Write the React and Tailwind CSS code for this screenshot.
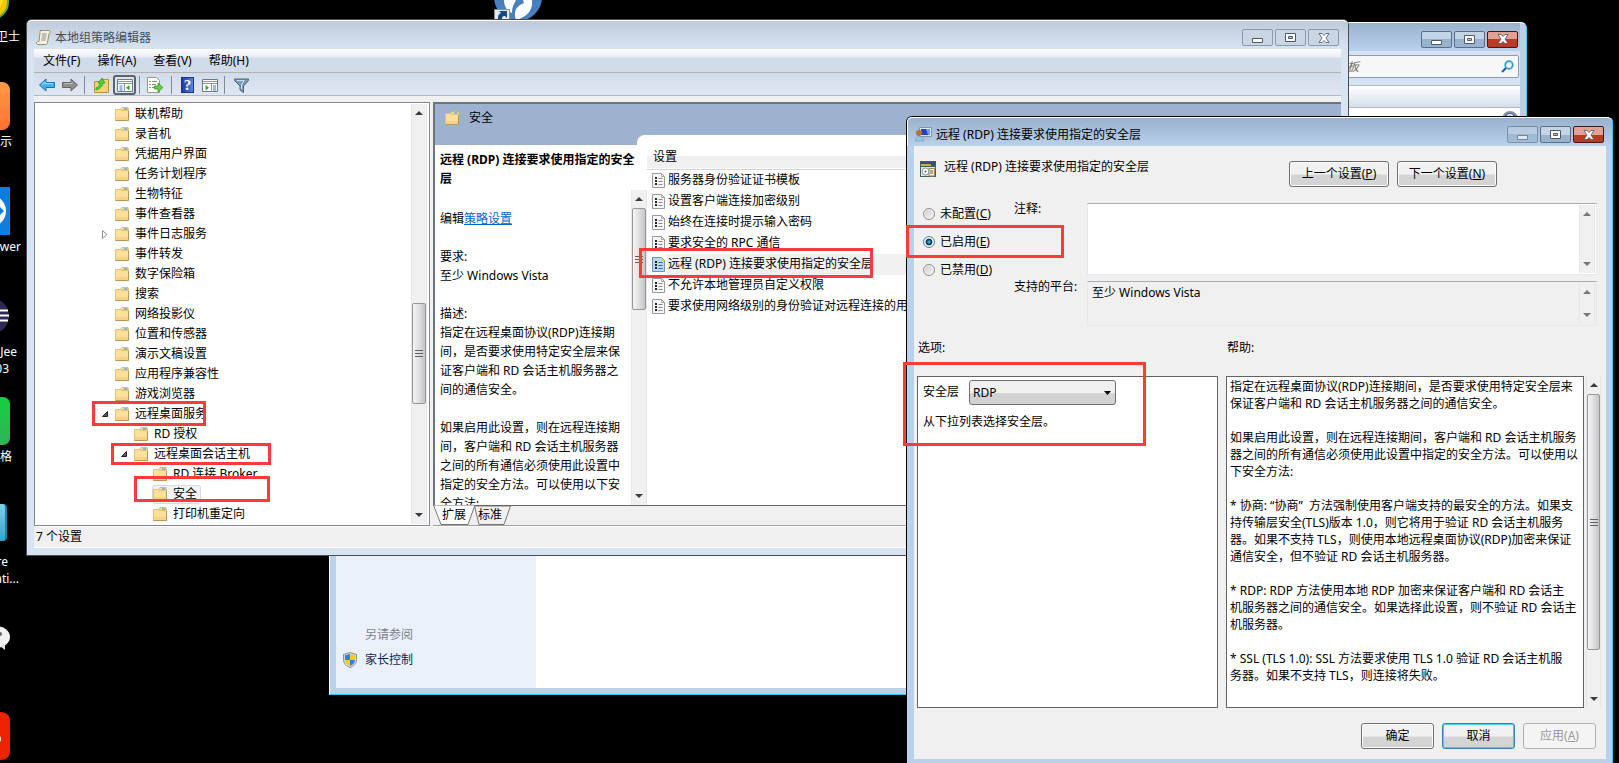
import React, { useState } from 'react';

const treeItems = [
    { label: '联机帮助', level: 0 },
    { label: '录音机', level: 0 },
    { label: '凭据用户界面', level: 0 },
    { label: '任务计划程序', level: 0 },
    { label: '生物特征', level: 0 },
    { label: '事件查看器', level: 0 },
    { label: '事件日志服务', level: 0, arrow: 'closed' },
    { label: '事件转发', level: 0 },
    { label: '数字保险箱', level: 0 },
    { label: '搜索', level: 0 },
    { label: '网络投影仪', level: 0 },
    { label: '位置和传感器', level: 0 },
    { label: '演示文稿设置', level: 0 },
    { label: '应用程序兼容性', level: 0 },
    { label: '游戏浏览器', level: 0 },
    { label: '远程桌面服务', level: 0, arrow: 'open' },
    { label: 'RD 授权', level: 1 },
    { label: '远程桌面会话主机', level: 1, arrow: 'open' },
    { label: 'RD 连接 Broker', level: 2 },
    { label: '安全', level: 2, selected: true },
    { label: '打印机重定向', level: 2 },
];

const levelPadding = ['pl-[67px]', 'pl-[86px]', 'pl-[105px]'];

const policies = [
    '服务器身份验证证书模板',
    '设置客户端连接加密级别',
    '始终在连接时提示输入密码',
    '要求安全的 RPC 通信',
    '远程 (RDP) 连接要求使用指定的安全层',
    '不允许本地管理员自定义权限',
    '要求使用网络级别的身份验证对远程连接的用户',
];

const description = [
    '指定在远程桌面协议(RDP)连接期',
    '间，是否要求使用特定安全层来保',
    '证客户端和 RD 会话主机服务器之',
    '间的通信安全。',
    '',
    '如果启用此设置，则在远程连接期',
    '间，客户端和 RD 会话主机服务器',
    '之间的所有通信必须使用此设置中',
    '指定的安全方法。可以使用以下安',
    '全方法:',
];

const helpLines = [
    '指定在远程桌面协议(RDP)连接期间，是否要求使用特定安全层来',
    '保证客户端和 RD 会话主机服务器之间的通信安全。',
    '',
    '如果启用此设置，则在远程连接期间，客户端和 RD 会话主机服务',
    '器之间的所有通信必须使用此设置中指定的安全方法。可以使用以',
    '下安全方法:',
    '',
    '* 协商: “协商”  方法强制使用客户端支持的最安全的方法。如果支',
    '持传输层安全(TLS)版本 1.0，则它将用于验证 RD 会话主机服务',
    '器。如果不支持 TLS，则使用本地远程桌面协议(RDP)加密来保证',
    '通信安全，但不验证 RD 会话主机服务器。',
    '',
    '* RDP: RDP 方法使用本地 RDP 加密来保证客户端和 RD 会话主',
    '机服务器之间的通信安全。如果选择此设置，则不验证 RD 会话主',
    '机服务器。',
    '',
    '* SSL (TLS 1.0): SSL 方法要求使用 TLS 1.0 验证 RD 会话主机服',
    '务器。如果不支持 TLS，则连接将失败。',
];

const FolderIcon = () => (
    <svg width="14" height="14" viewBox="0 0 14 14" className="shrink-0">
        <path d="M6 1.5 7 .5h6l1 1V6H6z" fill="#efd9a0" stroke="#c9b27c" strokeWidth=".8" />
        <path d="M9 2h3.5" stroke="#5f9bd0" strokeWidth="1.2" />
        <path d="M.5 2.500h5l1 1h7v10H.5z" fill="#ffe09a" stroke="#e3c077" />
        <path d="M1 10h12v3H1z" fill="#f9d283" />
        <path d="M.5 13.500h13V4" fill="none" stroke="#b8975a" />
    </svg>
);

const PolicyIcon = ({ active }) => (
    <svg width="13" height="15" viewBox="0 0 13 15" className="shrink-0">
        <path d="M.5.5h9l3 3v11H.5z" fill={active ? '#b5d8fb' : '#f8f8f8'} stroke={active ? '#6d93b8' : '#9b9b9b'} />
        <path d="M9.500 1v2.500h3" fill="none" stroke={active ? '#e5e500' : '#a9a9a9'} />
        <path d="M3 4h2v2H3zM3 7h2v2H3zM3 10h2v2H3z" fill="#222" />
        <path d="M6.500 5.500h4M6.500 8.500h4M6.500 11.500h4" stroke={active ? '#37669a' : '#8a8a8a'} />
    </svg>
);

const Triangle = ({ down, faded }) => (
    <svg width="8" height="4" viewBox="0 0 8 4" className="shrink-0">
        <path d={down ? 'M0 0h8L4 4z' : 'M0 4h8L4 0z'} fill={faded ? '#777' : '#3c3c3c'} />
    </svg>
);

// thumb holds the full classes for the position and size of the handle
const ScrollBar = ({ thumb, faded, className }) => (
    <div className={`relative flex shrink-0 flex-col items-center justify-between bg-[#f0f0f0] border-x border-[#e6e6e6] py-[7px] ${className}`}>
        <Triangle faded={faded} />
        {thumb && (
            <div className={`absolute inset-x-0 flex items-center justify-center rounded-[2px] border border-[#979797] bg-gradient-to-r from-[#f5f5f5] via-[#dfdfe1] to-[#c4c5c9] ${thumb}`}>
                <svg width="8" height="9" viewBox="0 0 8 9">
                    <path d="M0 1.500h8M0 4.500h8M0 7.500h8" stroke="#606060" />
                </svg>
            </div>
        )}
        <Triangle down faded={faded} />
    </div>
);

const CaptionButtons = ({ inactive, dimMin }) => {
    const base = 'flex h-[17px] w-[31px] items-center justify-center rounded-[2px] border';
    const plain = inactive
        ? 'border-[#8b99aa] bg-[#cad6e3]'
        : 'border-[#5b6f88] bg-gradient-to-b from-[#c3d4e7] from-50% to-[#98b3d0] to-50%';
    return (
        <div className="flex gap-[2px]">
            <button aria-label="最小化" className={`${base} ${plain} ${dimMin ? 'opacity-60' : ''}`}>
                <svg width="11" height="11" viewBox="0 0 11 11">
                    <path d="M.5 6.500h10v4H.5z" fill="#fff" stroke="#505a66" />
                </svg>
            </button>
            <button aria-label="最大化" className={`${base} ${plain}`}>
                <svg width="11" height="9" viewBox="0 0 11 9">
                    <path d="M.5.5h10v8H.5z" fill="#fff" stroke="#505a66" />
                    <path d="M3.500 3.500h4v2h-4z" fill="#b5c6da" stroke="#505a66" />
                </svg>
            </button>
            <button
                aria-label="关闭"
                className={`${base} ${inactive ? plain : 'border-[#431621] bg-gradient-to-b from-[#e3a094] from-50% to-[#b93b24] to-50%'}`}
            >
                <svg width="12" height="10" viewBox="0 0 12 10">
                    <path d="M1 .5h3l2 2 2-2h3L8 5l3 4.500H8L6 7.500l-2 2H1L4 5z" fill="#fff" stroke="#57606e" strokeWidth=".9" />
                </svg>
            </button>
        </div>
    );
};

const ToolSep = () => <div className="h-[18px] w-px bg-[#7f8a98]" />;

const Toolbar = () => (
    <div className="flex h-[23px] items-center border-b border-[#aeb9c9] bg-gradient-to-b from-[#d1dcea] to-[#e1e7f1] pl-[5px] pt-[2px]">
        <button aria-label="后退" className="mr-[7px]">
            <svg width="16" height="14" viewBox="0 0 16 14">
                <path d="M.5 7 7 1v3.500h8.500v5H7V13z" fill="#46b2ea" stroke="#1f6fb5" />
                <path d="M3 6.500 6 4v1.500h8" fill="none" stroke="#a5e0fa" />
            </svg>
        </button>
        <button aria-label="前进" className="mr-[6px]">
            <svg width="16" height="14" viewBox="0 0 16 14">
                <path d="M15.500 7 9 1v3.500H.5v5H9V13z" fill="#8f8f8f" stroke="#646464" />
                <path d="M2 5.500h8V4" fill="none" stroke="#c0c0c0" />
            </svg>
        </button>
        <ToolSep />
        <button aria-label="上移一级" className="ml-[9px] mr-[4px]">
            <svg width="15" height="16" viewBox="0 0 15 16">
                <path d="M.5 4.500h6l2-2h6v13H.5z" fill="#f5d07c" stroke="#b9913f" />
                <path d="M2 11c2-1 4-3 4-5H4l4-5 3 5H9c0 3-3 6-7 7z" fill="#4bd33a" stroke="#1f9a1c" strokeWidth=".7" />
            </svg>
        </button>
        <button aria-label="显示/隐藏控制台树" className="mr-[3px] flex h-[20px] w-[23px] items-center justify-center rounded-[3px] border-2 border-[#5c6470] bg-[#dde4ec]">
            <svg width="16" height="13" viewBox="0 0 16 13">
                <path d="M.5.5h15v12H.5z" fill="#fff" stroke="#6e7a86" />
                <path d="M1 2.500h14M1 4.500h14M7.500 5v8" stroke="#8b96a2" />
                <path d="M2.500 7h3M2.500 9h3M2.500 11h3" stroke="#2f78c4" />
                <path d="M12.500 6v5.500L9 8.700z" fill="#36a51f" />
            </svg>
        </button>
        <ToolSep />
        <button aria-label="导出列表" className="mx-[7px]">
            <svg width="17" height="16" viewBox="0 0 17 16">
                <path d="M.5.500h9l3 3v12H.5z" fill="#fffdf0" stroke="#9a9a8c" />
                <path d="M2.500 4.500h1M2.500 7.500h1M2.500 10.500h1" stroke="#333" />
                <path d="M5 4.500h5M5 7.500h4M5 10.500h3" stroke="#888" />
                <path d="M7.500 9H11V6l5 4.500-5 4.500v-3H7.500z" fill="#5bd33d" stroke="#2c9a1e" strokeWidth=".7" />
            </svg>
        </button>
        <ToolSep />
        <button aria-label="帮助" className="ml-[9px] mr-[8px] flex h-[16px] w-[13px] items-center justify-center border border-[#1c3588] bg-gradient-to-r from-[#1d3d9c] to-[#5a85dd] font-['Liberation_Serif',serif] text-[15px] font-bold leading-[14px] text-white">
            ?
        </button>
        <button aria-label="显示/隐藏操作窗格" className="mr-[6px]">
            <svg width="16" height="13" viewBox="0 0 16 13">
                <path d="M.5.5h15v12H.5z" fill="#fff" stroke="#6e7a86" />
                <path d="M1 2.500h14M1 4.500h14M9.500 5v8" stroke="#8b96a2" />
                <path d="M11 7h3M11 9h3M11 11h3" stroke="#2f78c4" />
                <path d="M3.500 6v5.500L7 8.700z" fill="#36a51f" />
            </svg>
        </button>
        <ToolSep />
        <button aria-label="筛选器" className="ml-[9px]">
            <svg width="15" height="15" viewBox="0 0 15 15">
                <path d="M.5 1h14v1.500L9.500 8v6.500L6 12V8L.5 2.500z" fill="#7d9bb5" stroke="#4c657c" />
                <path d="M3 2.500h7L7.500 7v4" fill="none" stroke="#d0e2f0" />
            </svg>
        </button>
    </div>
);

const TreeRow = ({ item }) => (
    <li className={`flex h-[20px] items-center ${levelPadding[item.level]}`}>
        <span className="flex w-[12px] shrink-0 items-center">
            {item.arrow === 'closed' && (
                <svg width="6" height="9" viewBox="0 0 6 9">
                    <path d="M.5.500v8l4.500-4z" fill="#fff" stroke="#8f8f8f" />
                </svg>
            )}
            {item.arrow === 'open' && (
                <svg width="6" height="6" viewBox="0 0 6 6">
                    <path d="M5.500.5v5h-5z" fill="#595959" stroke="#222" />
                </svg>
            )}
        </span>
        <span className={`flex h-[19px] items-center gap-[6px] rounded-[3px] border pr-[3px] ${item.selected ? 'border-[#dadada] bg-[#f2f2f2]' : 'border-transparent'}`}>
            <FolderIcon />
            <span className="whitespace-nowrap">{item.label}</span>
        </span>
    </li>
);

const Tabs = () => (
    <div className="relative flex h-[21px] items-center border-b border-[#a0a0a0] bg-[#f0f0f0]">
        <svg width="80" height="20" viewBox="0 0 80 20" className="absolute left-0 top-0">
            <path d="M41.500 1 46 19.500h25L77.500 1z" fill="#f0f0f0" stroke="#777" />
            <path d="M.5 0 8 19.500h27L42 0z" fill="#fff" stroke="#777" />
        </svg>
        <div className="absolute left-[42px] right-0 top-0 h-px bg-[#696969]" />
        <button className="relative ml-[9px]">扩展</button>
        <button className="relative ml-[12px]">标准</button>
    </div>
);

const PolicyEditor = () => (
    <section className="absolute left-[26px] right-[270px] top-[19px] rounded-t-[6px] border border-[#4d4d4d] bg-[#d7e4f2] px-[7px] pb-[7px]">
        <header className="-mx-[7px] flex h-[29px] items-center rounded-t-[5px] border-t border-white bg-gradient-to-b from-[#bfcbda] to-[#d7e4f2] pl-[9px] pr-[9px] pt-[5px]">
            <svg width="15" height="15" viewBox="0 0 15 15" className="mr-[4px]">
                <path d="M4 .5h9.500c1 0 1 3-.5 3l-1.500 9c0 1.500-1 2-2 2H2c-2 0-2-3 0-3h1l1-9c0-1 .5-2 0-2z" fill="#f6f0df" stroke="#9c8f70" />
                <path d="M6 4h4.500M6 6h4.500M5.500 8H10M5 10h4.500" stroke="#8b8f96" />
            </svg>
            <h1 className="flex-1 text-[#42505c]">本地组策略编辑器</h1>
            <CaptionButtons inactive />
        </header>
        <nav className="flex h-[24px] items-center gap-[17px] border-b border-[#b3b3b3] bg-gradient-to-b from-white via-[#e8edf6] via-35% to-[#d1dcea] to-40% pl-[9px]">
            <button>文件(F)</button>
            <button>操作(A)</button>
            <button>查看(V)</button>
            <button>帮助(H)</button>
        </nav>
        <Toolbar />
        <div className="flex gap-[3px] bg-[#f0f0f0] pt-[6px]">
            <div className="flex w-[396px] shrink-0 border border-[#828790] bg-white py-px pr-[2px]">
                <ul className="min-w-0 flex-1">
                    {treeItems.map((item) => (
                        <TreeRow key={item.label} item={item} />
                    ))}
                </ul>
                <ScrollBar className="w-[16px]" thumb="top-[199px] h-[101px]" />
            </div>
            <div className="flex min-w-0 flex-1 flex-col">
                <div className="flex min-h-0 flex-1 flex-col border-l-2 border-t-2 border-[#6f747c] bg-[#9cb2ce]">
                    <div className="flex h-[31px] shrink-0 items-center gap-[10px] pb-[3px] pl-[10px]">
                        <FolderIcon />
                        <span>安全</span>
                    </div>
                    <div className="h-[10px] shrink-0 pl-[202px]">
                        <div className="h-full rounded-tl-[8px] bg-white" />
                    </div>
                    <div className="flex min-h-0 flex-1 bg-white">
                        <div className="flex w-[212px] shrink-0 flex-col">
                            <h2 className="whitespace-nowrap pb-[2px] pl-[5px] pt-[5px] font-bold leading-[19px]">
                                远程 (RDP) 连接要求使用指定的安全
                                <br />层
                            </h2>
                            <div className="flex h-0 grow overflow-hidden">
                                <div className="flex-1 whitespace-nowrap pl-[5px] pt-[19px] leading-[19px]">
                                    <p>
                                        编辑
                                        <a href="#" className="text-[#0066cc] underline">策略设置</a>
                                    </p>
                                    <p className="mt-[19px]">要求:</p>
                                    <p>至少 Windows Vista</p>
                                    <p className="mt-[19px]">描述:</p>
                                    {description.map((line, i) => (
                                        <p key={i} className="h-[19px]">{line}</p>
                                    ))}
                                </div>
                                <ScrollBar className="w-[16px]" thumb="top-[18px] h-[102px]" />
                            </div>
                        </div>
                        <table className="h-fit min-w-0 flex-1 table-fixed border-collapse">
                            <thead>
                                <tr className="h-[24px] border-b border-[#d5d5d5] bg-gradient-to-b from-white from-45% to-[#f0f0f0] to-50%">
                                    <th className="pl-[6px] text-left font-normal">设置</th>
                                </tr>
                            </thead>
                            <tbody>
                                {policies.map((name, i) => (
                                    <tr key={name} className="h-[21px]">
                                        <td className="p-0 pl-[5px]">
                                            <div className="flex h-[21px] items-center">
                                                <PolicyIcon active={i === 4} />
                                                <span className={`ml-[2px] flex h-full min-w-[440px] items-center whitespace-nowrap pl-px ${i === 4 ? 'bg-[#f0f0f0]' : ''}`}>
                                                    {name}
                                                </span>
                                            </div>
                                        </td>
                                    </tr>
                                ))}
                            </tbody>
                        </table>
                    </div>
                </div>
                <Tabs />
            </div>
        </div>
        <footer className="flex h-[22px] items-center border-y border-white bg-[#f0f0f0] pl-[2px]">7 个设置</footer>
    </section>
);

const ControlPanel = () => (
    <section className="absolute left-[329px] right-[92px] top-[22px] flex h-[673px] flex-col rounded-t-[6px] border border-b-[#2ec5df] border-l-white border-r-[#3bd0f0] border-t-white bg-[#b9d1ea] px-[6px] pb-[6px]">
        <header className="flex h-[28px] shrink-0 items-center justify-end bg-gradient-to-b from-[#9ab2cd] to-[#b9d1ea] pr-[2px] pt-[4px]">
            <CaptionButtons />
        </header>
        <div className="flex h-[34px] shrink-0 items-center justify-end bg-[#d5e2f1] pb-[3px] pr-[1px]">
            <div className="relative flex w-[242px] items-center">
                <input aria-label="搜索控制面板" placeholder="搜索控制面板" className="h-[23px] w-full rounded-[2px] border border-[#8c9bad] bg-[#f7f7f7] pl-[9px] italic placeholder:text-[#6d6d6d]" />
                <svg width="13" height="13" viewBox="0 0 13 13" className="absolute right-[5px]">
                    <circle cx="8" cy="5" r="3.800" fill="#e7f5ff" stroke="#3f9bd8" strokeWidth="1.800" />
                    <path d="M5 8 1 12" stroke="#2a5db0" strokeWidth="2.200" />
                </svg>
            </div>
        </div>
        <div className="h-[23px] shrink-0 border-y border-[#b0bccb] bg-gradient-to-b from-white to-[#d5deeb]" />
        <div className="flex min-h-0 flex-1 bg-white">
            <aside className="flex w-[200px] flex-col justify-end bg-[#eaf1fb] pb-[19px] pl-[7px]">
                <p className="pl-[22px] leading-[18px] text-[#7d828a]">另请参阅</p>
                <a href="#" className="mt-[7px] flex items-center gap-[8px] leading-[18px] text-[#151c55]">
                    <svg width="14" height="16" viewBox="0 0 14 16">
                        <path d="M7 .5 13.500 2.500v5c0 4-3 7-6.500 8C3.500 14.500.5 11.500.5 7.500v-5z" fill="#d5d8dc" stroke="#8a8f96" />
                        <path d="M7 2v6H2V3.300z" fill="#2c83dd" />
                        <path d="M7 2v6h5V3.300z" fill="#f6cc1d" />
                        <path d="M7 8v6C4 13 2.200 11 2 8z" fill="#f6cc1d" />
                        <path d="M7 8v6c3-1 4.800-3 5-6z" fill="#2c83dd" />
                    </svg>
                    家长控制
                </a>
            </aside>
            <div className="flex flex-1 justify-end pr-[2px] pt-[3px]">
                <svg width="16" height="16" viewBox="0 0 16 16">
                    <circle cx="8" cy="8" r="7" fill="#3466cf" stroke="#8e939b" strokeWidth="2" />
                    <path d="M5.500 6c0-3 5-3 5 0 0 2-2.500 2-2.500 4" fill="none" stroke="#fff" strokeWidth="1.600" />
                </svg>
            </div>
        </div>
    </section>
);

const dialogButton = 'h-[26px] rounded-[3px] border border-[#707070] bg-gradient-to-b from-[#f1f1f1] from-50% to-[#d4d4d4] to-55% shadow-[inset_0_0_0_1px_#fbfbfb]';

const states = [
    { id: 'unset', text: '未配置', hotkey: 'C' },
    { id: 'enabled', text: '已启用', hotkey: 'E' },
    { id: 'disabled', text: '已禁用', hotkey: 'D' },
];

const SettingDialog = () => {
    const [state, setState] = useState('enabled');
    const [layer, setLayer] = useState('RDP');

    return (
        <section className="absolute left-[906px] right-[6px] top-[116px] rounded-t-[6px] border border-l-black border-r-[#3bc4ea] border-t-black bg-[#b9d1ea] pb-[7px] pl-[7px] pr-[6px]">
            <header className="-ml-[7px] -mr-[6px] flex h-[29px] items-center rounded-t-[5px] border-l border-t border-white bg-gradient-to-b from-[#99b1cc] to-[#b9d1ea] pl-[7px] pr-[8px] pt-[5px]">
                <svg width="17" height="15" viewBox="0 0 17 15" className="mr-[4px]">
                    <path d="M4.500.5h12v9h-12z" fill="#e0e6ec" stroke="#8495a8" />
                    <path d="M6 2h9v6H6z" fill="#1c40cf" />
                    <path d="M11 2h4v6h-2z" fill="#6f9cf2" />
                    <path d="M9 10h4v2h2v1H8z" fill="#b5bfca" />
                    <circle cx="4" cy="6" r="3" fill="#b5713c" />
                    <path d="M0 14c0-6 8-6 9 0z" fill="#9dc3e4" stroke="#6e98bf" strokeWidth=".6" />
                </svg>
                <h2 className="flex-1">远程 (RDP) 连接要求使用指定的安全层</h2>
                <CaptionButtons dimMin />
            </header>
            <div className="bg-[#f0f0f0] pb-[10px] pt-[15px]">
                <div className="flex pl-[6px] pr-[109px]">
                    <svg width="16" height="16" viewBox="0 0 16 16" className="mr-[8px]">
                        <path d="M0 0h16v16H0z" fill="#41635f" />
                        <path d="M1 1h14v3H1z" fill="#2b4d8f" />
                        <path d="M1 3h10v2H1z" fill="#d9a92b" />
                        <path d="M1 6h14v9H1z" fill="#dfe6e4" />
                        <circle cx="5.500" cy="10.500" r="3.500" fill="#fff" stroke="#8a9a98" />
                        <circle cx="5.500" cy="10.500" r="1" fill="#556" />
                        <path d="M9 7.500h5.500V15H9z" fill="#f4ecd2" stroke="#a08a54" />
                        <path d="M10 10h3M10 12h3" stroke="#766" />
                    </svg>
                    <h3 className="flex-1 leading-[12px]">远程 (RDP) 连接要求使用指定的安全层</h3>
                    <div className="flex gap-[8px]">
                        <button className={`w-[100px] ${dialogButton}`}>上一个设置(<u>P</u>)</button>
                        <button className={`w-[100px] ${dialogButton}`}>下一个设置(<u>N</u>)</button>
                    </div>
                </div>

                <div className="mt-[13px] flex pl-[9px] pr-[9px]">
                    <div className="w-[91px] shrink-0">
                        {states.map((s) => (
                            <label key={s.id} className="flex h-[28px] items-center gap-[5px] whitespace-nowrap">
                                <input
                                    type="radio"
                                    name="state"
                                    checked={state === s.id}
                                    onChange={() => setState(s.id)}
                                    className="h-[12px] w-[12px] appearance-none rounded-full border border-[#8e8f8f] bg-gradient-to-br from-[#c9ccd0] to-[#f6f6f6] shadow-[inset_0_0_0_1px_#f4f4f4] checked:border-[#5586a3] checked:bg-[radial-gradient(circle,#58c3ee_0,#0f3c5c_36%,#0f3c5c_44%,#d8e6ee_52%)]"
                                />
                                <span>{s.text}(<u>{s.hotkey}</u>)</span>
                            </label>
                        ))}
                    </div>
                    <div className="flex min-w-0 flex-1 flex-col gap-[6px] pt-[3px]">
                        <div className="flex h-[72px]">
                            <label htmlFor="comment" className="w-[73px] shrink-0 leading-[12px]">注释:</label>
                            <div className="flex flex-1 border border-[#e3e9ef] border-t-[#abadb3] bg-white p-px">
                                <textarea id="comment" className="flex-1 resize-none bg-white outline-none" />
                                <ScrollBar className="w-[16px]" faded />
                            </div>
                        </div>
                        <div className="flex h-[45px]">
                            <span className="w-[73px] shrink-0 leading-[12px]">支持的平台:</span>
                            <div className="flex flex-1 border border-[#e3e9ef] border-t-[#abadb3] p-px">
                                <p className="flex-1 pl-[3px] leading-[20px]">至少 Windows Vista</p>
                                <ScrollBar className="w-[16px]" faded />
                            </div>
                        </div>
                    </div>
                </div>

                <div className="mt-[12px] flex pl-[4px] leading-[20px]">
                    <span className="w-[309px]">选项:</span>
                    <span>帮助:</span>
                </div>
                <div className="mt-[18px] flex pl-[3px] pr-[5px]">
                    <div className="mr-[8px] w-[301px] shrink-0 border border-[#646464] bg-white pl-[5px] pt-[3px]">
                        <div className="flex gap-[10px]">
                            <label htmlFor="layer" className="leading-[24px]">安全层</label>
                            <div className="relative flex items-center">
                                <select
                                    id="layer"
                                    value={layer}
                                    onChange={(e) => setLayer(e.target.value)}
                                    className="h-[25px] w-[147px] appearance-none rounded-[3px] border border-[#707070] bg-gradient-to-b from-[#f0f0f0] from-50% to-[#d2d2d2] to-55% pl-[3px]"
                                >
                                    <option>RDP</option>
                                    <option>协商</option>
                                    <option>SSL (TLS 1.0)</option>
                                </select>
                                <svg width="7" height="4" viewBox="0 0 7 4" className="pointer-events-none absolute right-[5px]">
                                    <path d="M0 0h7L3.500 4z" fill="#000" />
                                </svg>
                            </div>
                        </div>
                        <p className="mt-[8px] leading-[18px]">从下拉列表选择安全层。</p>
                    </div>
                    <div className="mr-[2px] min-w-0 flex-1 overflow-hidden whitespace-pre border border-[#646464] bg-white pb-[23px] pl-[3px] pt-px leading-[17px]">
                        {helpLines.map((line, i) => (
                            <p key={i} className="h-[17px]">{line}</p>
                        ))}
                    </div>
                    <ScrollBar className="w-[15px]" thumb="top-[18px] h-[256px]" />
                </div>

                <div className="mt-[15px] flex justify-end gap-[8px] pr-[10px]">
                    <button className={`w-[73px] ${dialogButton}`}>确定</button>
                    <button className="h-[26px] w-[73px] rounded-[3px] border border-[#3c7fb1] bg-gradient-to-b from-[#f1f1f1] from-50% to-[#d4d4d4] to-55% shadow-[inset_0_0_0_1px_#48c8f4]">取消</button>
                    <button disabled className="h-[26px] w-[73px] rounded-[3px] border border-[#adb2b5] bg-[#f4f4f4] text-[#9a9a9a]">应用(<u>A</u>)</button>
                </div>
            </div>
        </section>
    );
};

const DesktopLabel = ({ children, className }) => (
    <span className={`absolute left-0 flex justify-end overflow-hidden whitespace-nowrap leading-[16px] text-white ${className}`}>
        {children}
    </span>
);

const Desktop = () => (
    <div>
        <svg width="12" height="20" viewBox="0 0 12 20" className="absolute left-0 top-0">
            <circle cx="-9" cy="2" r="17" fill="#ffc400" stroke="#55b432" strokeWidth="2" />
            <circle cx="-9" cy="-1" r="12" fill="#ffe11f" />
        </svg>
        <DesktopLabel className="top-[29px] w-[20px]">卫士</DesktopLabel>
        <div className="absolute left-0 top-[82px] h-[48px] w-[10px] rounded-r-[8px] bg-gradient-to-b from-[#ff9a45] to-[#ff7030]" />
        <DesktopLabel className="top-[134px] w-[12px]">示</DesktopLabel>
        <svg width="10" height="48" viewBox="0 0 10 48" className="absolute left-0 top-[187px]">
            <path d="M0 0h10v48H0z" fill="#0c7ee0" />
            <circle cx="-10" cy="24" r="16" fill="#fff" />
            <path d="M-4 23h4v-3l4 4-4 4v-3h-4z" fill="#0c7ee0" />
        </svg>
        <DesktopLabel className="top-[239px] w-[21px]">wer</DesktopLabel>
        <svg width="10" height="36" viewBox="0 0 10 36" className="absolute left-0 top-[298px]">
            <circle cx="-9" cy="18" r="18" fill="#2f2758" />
            <path d="M0 12.500h8M0 17.500h9M0 22.500h8" stroke="#fff" strokeWidth="2" />
        </svg>
        <DesktopLabel className="top-[344px] w-[17px]">Jee</DesktopLabel>
        <DesktopLabel className="top-[361px] w-[9px]">03</DesktopLabel>
        <div className="absolute left-0 top-[397px] h-[48px] w-[10px] rounded-r-[7px] bg-gradient-to-b from-[#0bd03c] to-[#2fb357]" />
        <DesktopLabel className="top-[449px] w-[12px]">格</DesktopLabel>
        <div className="absolute left-0 top-[504px] h-[37px] w-[7px] rounded-r-[4px] border-r-2 border-[#1286ae] bg-gradient-to-b from-[#7fd0e8] to-[#2ba3cc]" />
        <DesktopLabel className="top-[554px] w-[8px]">re</DesktopLabel>
        <DesktopLabel className="top-[571px] w-[19px]">ati...</DesktopLabel>
        <svg width="10" height="26" viewBox="0 0 10 26" className="absolute left-0 top-[625px]">
            <ellipse cx="-4" cy="12" rx="14" ry="11" fill="#f2f2f2" />
            <path d="M5 18v7l-5-4z" fill="#e2e2e2" />
            <circle cx="0" cy="9" r="2" fill="#666" />
        </svg>
        <svg width="10" height="48" viewBox="0 0 10 48" className="absolute left-0 top-[712px]">
            <path d="M0 0c6 0 10 3 10 9v30c0 6-4 9-10 9z" fill="#ee2400" />
            <circle cx="-4" cy="27" r="5" fill="#fff" />
        </svg>
        <svg width="48" height="20" viewBox="0 0 48 20" className="absolute left-[494px] top-0">
            <circle cx="24" cy="-3" r="24" fill="#4781bd" />
            <path d="M10 0c0 7 4 12 8 13 0-6 2-9 4-13zM22 20c-3-8 0-14 8-17l-1-3h9c1 10-4 16-16 20z" fill="#fff" />
            <path d="M.5 9.500h15V20H.5z" fill="#e3e9f0" stroke="#8b8f95" />
            <path d="M4 18c0-3 1-4 3-5l-2-2h8v7l-2-2c-3 0-3 2-3 4H4z" fill="#164a86" />
        </svg>
    </div>
);

const marks = [
    'left-[92px] top-[401px] h-[25px] w-[114px]',
    'left-[111px] top-[443px] h-[22px] w-[160px]',
    'left-[134px] top-[476px] h-[26px] w-[136px]',
    'left-[639px] top-[248px] h-[30px] w-[234px]',
    'left-[906px] top-[225px] h-[33px] w-[158px]',
    'left-[903px] top-[362px] h-[84px] w-[243px]',
];

const App = () => {
    return (
        <main className="relative h-screen overflow-hidden bg-black font-['Noto_Sans','Noto_Sans_CJK_SC',sans-serif] text-[12px] leading-[16px] text-black">
            <Desktop />
            <ControlPanel />
            <PolicyEditor />
            <SettingDialog />
            {marks.map((mark) => (
                <div key={mark} className={`pointer-events-none absolute border-3 border-[#fb3a3a] ${mark}`} />
            ))}
        </main>
    );
};

export default App;
